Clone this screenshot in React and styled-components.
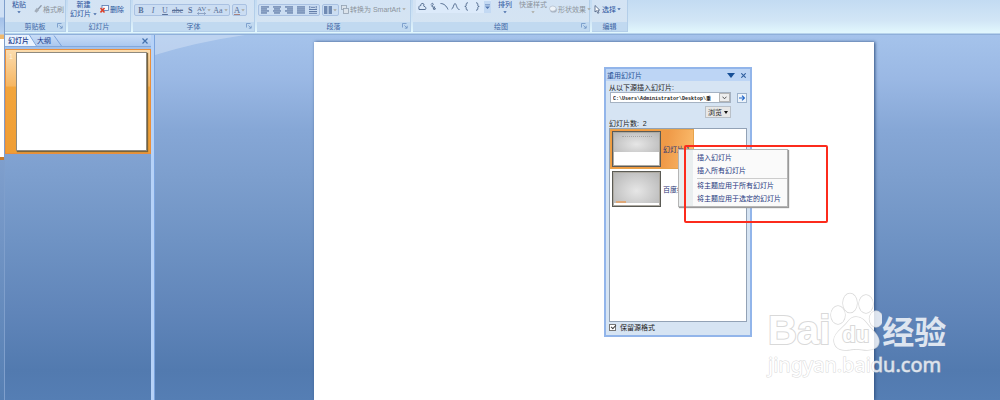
import React from "react";
import styled, { createGlobalStyle } from "styled-components";

const GlobalStyle = createGlobalStyle`
  * {
    box-sizing: border-box;
  }

  body {
    margin: 0;
    font-family: "Liberation Sans", "Noto Sans CJK SC", sans-serif;
    font-size: 7px;
    line-height: 9px;
    color: #1c3a78;
  }

  button {
    margin: 0;
    padding: 0;
    border: none;
    background: none;
    font: inherit;
    color: inherit;
    cursor: pointer;
  }
`;

const Caret = ({ color = "#3f66a5" }) => (
  <svg width="4" height="3" viewBox="0 0 4 3">
    <path d="M0.3 0.3h3.4L2 2.3z" fill={color} />
  </svg>
);

const AlignIcon = ({ rows }) => (
  <svg width="9" height="8" viewBox="0 0 9 8">
    {rows.map(([x, w], i) => (
      <rect key={i} x={x} y={i * 2 + 0.3} width={w} height="1.3" fill="#637da8" />
    ))}
  </svg>
);

const alignments = [
  { name: "左对齐", rows: [[0, 8], [0, 6], [0, 8], [0, 6]] },
  { name: "居中", rows: [[0, 8], [1, 6], [0, 8], [1, 6]] },
  { name: "右对齐", rows: [[0, 8], [2, 6], [0, 8], [2, 6]] },
  { name: "两端对齐", rows: [[0, 8], [0, 8], [0, 8], [0, 8]] },
];

const shapes = [
  { name: "任意多边形", d: "M1 7.5C0.5 5 1 3.5 2.8 3.6 2.2 1.6 5 0.8 5.8 2 6.3 3 5 3.8 5.8 4.2 8 4.2 8.5 7.5 7 7.5z" },
  { name: "自由曲线", d: "M2 2.5C3 0.5 5 1.5 4 3S1.5 3 3 4.5 7 4 5.5 5.5 3.5 6 5 7.5M5 7.5L7 6.5M5 7.5V5.5" },
  { name: "弧形", d: "M0.5 1.5C4 1.5 6.5 4 8 7.5" },
  { name: "曲线", d: "M0.5 7C2.5 7 2.5 1.5 4 1.5S5.5 7.5 8.5 7.5" },
  { name: "左大括号", d: "M6 0.8C4 0.8 4.2 1.8 4.2 3S3.8 4.4 2.8 4.4C3.8 4.4 4.2 4.8 4.2 6S4 8.2 6 8.2" },
  { name: "右大括号", d: "M3 0.8C5 0.8 4.8 1.8 4.8 3S5.2 4.4 6.2 4.4C5.2 4.4 4.8 4.8 4.8 6S5 8.2 3 8.2" },
];

const Group = ({ title, width, launcher, children }) => (
  <GroupBox $width={width}>
    <GroupControls>{children}</GroupControls>
    <GroupTitle>
      <span>{title}</span>
      {launcher && (
        <Launcher aria-label={title}>
          <svg width="6" height="6" viewBox="0 0 6 6" fill="none" stroke="#6f93c4" strokeWidth="0.8">
            <path d="M0.5 4.5V0.5H4.5M2.4 2.4L5 5M5.2 2.8V5.2H2.8" />
          </svg>
        </Launcher>
      )}
    </GroupTitle>
  </GroupBox>
);

const Ribbon = () => (
  <RibbonBar>
    <Group title="剪贴板" width={61} launcher>
      <BigButton $width={26}>
        粘贴
        <Caret />
      </BigButton>
      <SmallButton $muted>
        <svg width="8" height="8" viewBox="0 0 8 8">
          <path d="M7.5 0.3L4 4.2" stroke="#8d99aa" strokeWidth="1.3" />
          <path d="M2.8 2.8L5.2 5 2.6 7.8 0.3 6.2z" fill="#a3adb9" />
        </svg>
        格式刷
      </SmallButton>
    </Group>

    <Group title="幻灯片" width={63}>
      <BigButton $width={29}>
        新建
        <span>
          幻灯片 <Caret />
        </span>
      </BigButton>
      <SmallButton>
        <svg width="9" height="8" viewBox="0 0 9 8">
          <rect x="2" y="0.5" width="6.5" height="5" fill="#f5f8fd" stroke="#5577ae" strokeWidth="0.8" />
          <path d="M0.5 3L4.5 7.4M4.5 3L0.5 7.4" stroke="#df3d25" strokeWidth="1.5" />
        </svg>
        删除
      </SmallButton>
    </Group>

    <Group title="字体" width={122} launcher>
      <ButtonStrip>
        <StripButton><b>B</b></StripButton>
        <StripButton><i>I</i></StripButton>
        <StripButton><u>U</u></StripButton>
        <StripButton><s>abc</s></StripButton>
        <StripButton><b>S</b></StripButton>
        <StripButton>
          <Spacing>
            AV
            <svg width="9" height="3" viewBox="0 0 9 3" fill="none" stroke="#7f95b8" strokeWidth="0.8">
              <path d="M1.8 0.2L0.5 1.5 1.8 2.8M0.5 1.5H8.5M7.2 0.2L8.5 1.5 7.2 2.8" />
            </svg>
          </Spacing>
          <Caret color="#a9a69c" />
        </StripButton>
        <StripButton>Aa<Caret color="#a9a69c" /></StripButton>
      </ButtonStrip>
      <ButtonStrip>
        <StripButton>
          <FontColor>A</FontColor>
          <Caret color="#a9a69c" />
        </StripButton>
      </ButtonStrip>
    </Group>

    <Group title="段落" width={154} launcher>
      <ButtonStrip>
        {alignments.map((item) => (
          <StripButton key={item.name} aria-label={item.name}>
            <AlignIcon rows={item.rows} />
          </StripButton>
        ))}
        <StripButton aria-label="分散对齐">
          <svg width="9" height="8" viewBox="0 0 9 8" stroke="#637da8">
            <path d="M0 3.5H8M0 5.5H8M0 7.3H8M0.8 0V2.5M7.2 0V2.5M2 1.3H6" />
          </svg>
        </StripButton>
      </ButtonStrip>
      <ButtonStrip>
        <StripButton aria-label="分栏">
          <svg width="8" height="8" viewBox="0 0 8 8" stroke="#536f9f" strokeWidth="1.3">
            <path d="M0 1H3.4M0 3H3.4M0 5H3.4M0 7H3.4M4.6 1H8M4.6 3H8M4.6 5H8M4.6 7H8" />
          </svg>
          <Caret color="#a9a69c" />
        </StripButton>
      </ButtonStrip>
      <SmallButton $muted>
        <svg width="8" height="9" viewBox="0 0 8 9" fill="#dbe3eb" stroke="#93a1b1" strokeWidth="0.8">
          <rect x="0.5" y="0.5" width="5" height="4" />
          <rect x="2.5" y="3.5" width="5" height="5" />
        </svg>
        转换为 SmartArt <Caret color="#a9a69c" />
      </SmallButton>
    </Group>

    <Group title="绘图" width={177} launcher>
      <Gallery>
        {shapes.map((shape) => (
          <button key={shape.name} aria-label={shape.name}>
            <svg width="9" height="9" viewBox="0 0 9 9" fill="none" stroke="#486287" strokeWidth="0.9">
              <path d={shape.d} />
            </svg>
          </button>
        ))}
        <GalleryMore aria-label="其他">
          <svg width="5" height="6" viewBox="0 0 5 6">
            <path d="M0 0.5H5V1.3H0zM0 2.5H5L2.5 5z" fill="#5277b0" />
          </svg>
        </GalleryMore>
      </Gallery>
      <BigButton $width={24}>
        排列
        <Caret />
      </BigButton>
      <BigButton $width={28} $muted>
        快速样式
        <Caret color="#a9a69c" />
      </BigButton>
      <SmallButton $muted>
        <svg width="8" height="8" viewBox="0 0 8 8">
          <ellipse cx="4.5" cy="5" rx="3.3" ry="2.6" fill="#a8b3c2" />
          <ellipse cx="3.8" cy="3.6" rx="3.3" ry="2.6" fill="#eef3f8" stroke="#a8b3c2" strokeWidth="0.6" />
        </svg>
        形状效果 <Caret color="#a9a69c" />
      </SmallButton>
    </Group>

    <Group title="编辑" width={36}>
      <SmallButton>
        <svg width="8" height="9" viewBox="0 0 8 9">
          <path d="M2 0.5V7L3.6 5.7 4.8 8.3 6 7.7 4.8 5.3 6.6 5z" fill="#fff" stroke="#44597c" strokeWidth="0.8" />
        </svg>
        选择 <Caret />
      </SmallButton>
    </Group>
  </RibbonBar>
);

const Outline = () => (
  <OutlinePane>
    <OutlineHeader>
      <OutlineTab $active>幻灯片</OutlineTab>
      <svg width="8" height="11" viewBox="0 0 8 11" fill="none">
        <path d="M0 0H1L8 11H0z" fill="#eaf3fe" />
        <path d="M0.5 0L7.5 11" stroke="#7ba2da" />
      </svg>
      <OutlineTab>大纲</OutlineTab>
      <svg width="11" height="11" viewBox="0 0 11 11" fill="none" stroke="#7ba2da">
        <path d="M3 0.5L10.5 11" />
      </svg>
      <CloseButton aria-label="关闭">
        <svg width="6" height="6" viewBox="0 0 6 6" stroke="#4371ae" strokeWidth="1.2">
          <path d="M0.5 0.5L5.5 5.5M5.5 0.5L0.5 5.5" />
        </svg>
      </CloseButton>
    </OutlineHeader>
    <OutlineSlide>
      <SlideNumber>1</SlideNumber>
      <SlideThumb />
    </OutlineSlide>
  </OutlinePane>
);

const ReusePanel = () => (
  <PanelWindow>
    <PanelTitle>
      <span>重用幻灯片</span>
      <TitleButton aria-label="选项">
        <svg width="8" height="5" viewBox="0 0 8 5">
          <path d="M0 0H8L4 5z" fill="#174f96" />
        </svg>
      </TitleButton>
      <TitleButton aria-label="关闭">
        <svg width="5" height="5" viewBox="0 0 5 5" stroke="#315f9e" strokeWidth="1.1">
          <path d="M0.3 0.3L4.7 4.7M4.7 0.3L0.3 4.7" />
        </svg>
      </TitleButton>
    </PanelTitle>
    <PanelBody>
      <label htmlFor="source">从以下源插入幻灯片:</label>
      <SourceRow>
        <SourceBox>
          <SourceInput id="source" defaultValue="C:\Users\Administrator\Desktop\重" />
          <SourceToggle aria-label="展开">
            <svg width="5" height="4" viewBox="0 0 5 4" fill="none" stroke="#555">
              <path d="M0.5 0.7L2.5 2.8 4.5 0.7" />
            </svg>
          </SourceToggle>
        </SourceBox>
        <GoButton aria-label="转到">
          <svg width="6" height="6" viewBox="0 0 6 6" fill="none" stroke="#2468c9" strokeWidth="1.1">
            <path d="M0 3H5.2M3 0.7L5.4 3 3 5.3" />
          </svg>
        </GoButton>
      </SourceRow>
      <BrowseButton>
        浏览
        <svg width="4" height="3" viewBox="0 0 4 3">
          <path d="M0 0H4L2 3z" fill="#111" />
        </svg>
      </BrowseButton>
      <SlideCount>幻灯片数:&nbsp; 2</SlideCount>
      <SlideList>
        <SlideItem $selected>
          <Preview $fill="60%" />
          幻灯片 1
        </SlideItem>
        <SlideItem>
          <Preview $fill="92%" $accent />
          百度经验
        </SlideItem>
      </SlideList>
      <KeepFormat htmlFor="keep">
        <CheckBox id="keep" type="checkbox" defaultChecked />
        保留源格式
      </KeepFormat>
    </PanelBody>
    <ContextMenu>
      <MenuItem>插入幻灯片</MenuItem>
      <MenuItem>插入所有幻灯片</MenuItem>
      <MenuLine />
      <MenuItem>将主题应用于所有幻灯片</MenuItem>
      <MenuItem>将主题应用于选定的幻灯片</MenuItem>
    </ContextMenu>
    <RedFrame />
  </PanelWindow>
);

const Watermark = () => (
  <WatermarkBox>
    <WatermarkTop>
      <Brand>Bai</Brand>
      <Paw>
        <svg width="52" height="60" viewBox="0 0 52 60" fill="#fff" stroke="#d0d0d0" strokeWidth="1.4">
          <ellipse cx="8" cy="24" rx="7" ry="9" />
          <ellipse cx="20" cy="12" rx="7" ry="9.5" />
          <ellipse cx="36" cy="13" rx="7" ry="9" />
          <ellipse cx="46" cy="28" rx="6.5" ry="8" />
          <path d="M26 26C32 26 35 30 38 34S49 44 49 50 44 59 37 59C33 59 30 58 26 58S20 59 15 59C8 59 4 55 4 49S11 38 15 34 20 26 26 26z" />
        </svg>
        <PawText>du</PawText>
      </Paw>
      <BrandCn>经验</BrandCn>
    </WatermarkTop>
    <SiteName>jingyan.baidu.com</SiteName>
  </WatermarkBox>
);

const App = () => {
  return (
    <Screen>
      <GlobalStyle />
      <BackWindow>
        <BackRibbon />
        <BackSlide />
      </BackWindow>
      <MainWindow>
        <Ribbon />
        <Workspace>
          <Outline />
          <Splitter />
          <Stage>
            <Sheen viewBox="0 0 90 20" width="90" height="20">
              <path d="M0 0H90Q42 7 0 20z" fill="#fff" fillOpacity="0.28" />
            </Sheen>
            <Slide />
            <ReusePanel />
          </Stage>
        </Workspace>
      </MainWindow>
      <Watermark />
    </Screen>
  );
};

const Screen = styled.div`
  position: relative;
  display: flex;
  min-height: 100vh;
  overflow: hidden;
`;

const BackWindow = styled.div`
  flex: 0 0 5px;
  display: flex;
  flex-direction: column;
  background: linear-gradient(#a9c5ee 10%, #7f9fcd 40%, #567fb3);
  border-right: 1px solid #7f9fcc;
`;

const BackRibbon = styled.div`
  height: 39px;
  background: linear-gradient(#cfe0f5 0, #cfe0f5 17px, #a3c0e8 18px, #b9d2f1 34px, #f0b86d 35px);
`;

const BackSlide = styled.div`
  height: 121px;
  background: #fff;
  border-bottom: 3px solid #c77a2c;
`;

const MainWindow = styled.div`
  flex: 1;
  min-width: 0;
  display: flex;
  flex-direction: column;
`;

const RibbonBar = styled.div`
  display: flex;
  gap: 2px;
  height: 35px;
  padding-bottom: 3px;
  background: linear-gradient(#c3dbf2, #d2e6f6 60%, #e1f7fd 32px, #e1f7fd 33px, #8fb0da 34px);
  overflow: hidden;
`;

const GroupBox = styled.section`
  flex: 0 0 ${(props) => props.$width}px;
  min-width: 0;
  display: flex;
  flex-direction: column;
  border: solid #b3cee9;
  border-width: 0 1px 1px 0;
  background: linear-gradient(#d3e3f4, #d5e4f2);
`;

const GroupControls = styled.div`
  flex: 1;
  display: flex;
  align-items: flex-start;
  gap: 2px;
  padding: 0 1px;
  min-height: 0;
`;

const GroupTitle = styled.div`
  position: relative;
  height: 9px;
  background: #c1d9f0;
  text-align: center;
  color: #3f66a5;
`;

const Launcher = styled.button`
  position: absolute;
  right: 2px;
  top: 1px;
  display: flex;
`;

const BigButton = styled.button`
  flex: 0 0 ${(props) => props.$width}px;
  display: flex;
  flex-direction: column;
  align-items: center;
  height: 18px;
  white-space: nowrap;
  color: ${(props) => (props.$muted ? "#8c939b" : "#27509a")};

  > svg {
    margin-top: 2px;
  }

  span svg {
    vertical-align: middle;
  }
`;

const SmallButton = styled.button`
  display: flex;
  align-items: center;
  gap: 1px;
  height: 18px;
  white-space: nowrap;
  color: ${(props) => (props.$muted ? "#8c939b" : "#27509a")};
`;

const ButtonStrip = styled.div`
  display: flex;
  align-items: center;
  height: 12px;
  margin-top: 4px;
  border: 1px solid #a9c1e2;
  border-radius: 2px;
  background: #cbddf2;
`;

const StripButton = styled.button`
  display: flex;
  align-items: center;
  justify-content: center;
  gap: 1px;
  min-width: 12px;
  padding: 0 1px;
  height: 10px;
  font-family: "Liberation Serif", serif;
  font-size: 8px;
  color: #5a7198;
`;

const Spacing = styled.span`
  display: flex;
  flex-direction: column;
  align-items: center;
  font-size: 7px;
  line-height: 6px;
`;

const FontColor = styled.span`
  font-size: 9px;
  line-height: 8px;
  border-bottom: 1px solid #a7837f;
`;

const Gallery = styled.div`
  display: flex;
  align-items: center;
  gap: 2px;
  height: 13px;
  margin-left: 2px;
  padding-left: 2px;
  background: #dceafa;

  button {
    display: flex;
  }
`;

const GalleryMore = styled.button`
  padding: 3px 1px;
  background: #c3d9f3;
`;

const Workspace = styled.div`
  flex: 1;
  display: flex;
  background: linear-gradient(
    #a5c3eb 0,
    #9ab8e4 12%,
    #86a7d6 26%,
    #7c9ecd 40%,
    #6f93c4 56%,
    #6085b9 76%,
    #527aaf 92%,
    #557eb4 100%
  );
`;

const OutlinePane = styled.aside`
  flex: 0 0 146px;
`;

const OutlineHeader = styled.div`
  display: flex;
  height: 12px;
  margin-bottom: 2px;
  background: linear-gradient(#c9ddf7, #abc8ef);
  border-bottom: 1px solid #82a8dc;
`;

const OutlineTab = styled.button`
  height: 11px;
  padding-left: ${(props) => (props.$active ? 3 : 0)}px;
  background: ${(props) => (props.$active ? "#eaf3fe" : "none")};
  font-weight: ${(props) => (props.$active ? 500 : 400)};
  color: #16368a;
`;

const CloseButton = styled.button`
  display: flex;
  align-items: center;
  margin-left: auto;
  padding-right: 3px;
`;

const OutlineSlide = styled.div`
  display: flex;
  height: 105px;
  padding: 2px 3px 2px 0;
  border: 1px solid #ea8f3c;
  background: linear-gradient(#fbdcae, #f6b662 35%, #f2a53c 36%, #ef9d34);
`;

const SlideNumber = styled.span`
  width: 10px;
  padding-left: 3px;
  color: #fff3dc;
`;

const SlideThumb = styled.div`
  flex: 1;
  background: #fff;
  border: 1px solid #8f8a7e;
  box-shadow: 1px 1px 1px #79633c;
`;

const Splitter = styled.div`
  flex: 0 0 4px;
  background: #b6d2f8;
  border-right: 1px solid #7ba4de;
`;

const Stage = styled.main`
  position: relative;
  flex: 1;
  display: flex;
  padding: 7px 126px 0 159px;
`;

const Sheen = styled.svg`
  position: absolute;
  left: 0;
  top: 0;
`;

const Slide = styled.div`
  flex: 1;
  background: #fff;
  box-shadow: 1px 0 3px #2f4f7f;
`;

const PanelWindow = styled.section`
  position: absolute;
  left: 449px;
  top: 32px;
  width: 148px;
  border: 2px solid #92b5ea;
  background: #d6e4f3;
  color: #222;
`;

const PanelTitle = styled.header`
  display: flex;
  align-items: center;
  gap: 6px;
  height: 12px;
  padding: 0 4px 0 1px;
  background: #bdd5f5;
  color: #234f92;

  span {
    flex: 1;
  }
`;

const TitleButton = styled.button`
  display: flex;
`;

const PanelBody = styled.div`
  display: flex;
  flex-direction: column;
  padding: 2px 3px 2px 3px;
`;

const SourceRow = styled.div`
  display: flex;
  align-items: center;
  justify-content: space-between;
  padding-left: 1px;
`;

const SourceBox = styled.div`
  display: flex;
  width: 121px;
  height: 11px;
  border: 1px solid #a5b2c2;
  background: #fff;
`;

const SourceInput = styled.input`
  flex: 1;
  min-width: 0;
  padding: 0 0 0 2px;
  border: none;
  outline: none;
  background: none;
  font-family: "Liberation Mono", "Noto Sans CJK SC", monospace;
  font-size: 5px;
  font-weight: bold;
  color: #222;
`;

const SourceToggle = styled.button`
  display: flex;
  align-items: center;
  padding: 0 2px;
  border: 1px solid #b5b5b5;
  background: #eee;
`;

const GoButton = styled.button`
  display: flex;
  align-items: center;
  justify-content: center;
  width: 10px;
  height: 10px;
  border: 1px solid #9cb2cc;
  background: #edf4fb;
`;

const BrowseButton = styled.button`
  display: flex;
  align-items: center;
  justify-content: center;
  gap: 2px;
  align-self: flex-end;
  width: 26px;
  height: 12px;
  margin: 3px 16px 0 0;
  border: 1px solid #b9c0c8;
  background: #e7e7e7;
`;

const SlideCount = styled.div`
  margin: 1px 0 0;
`;

const SlideList = styled.ul`
  height: 194px;
  margin: 0;
  padding: 0;
  list-style: none;
  border: 1px solid #92a2b6;
  background: #fff;
`;

const SlideItem = styled.li`
  display: flex;
  align-items: center;
  gap: 2px;
  width: 84px;
  height: 40px;
  padding: 1px;
  white-space: nowrap;
  color: #1f3476;
  border: 1px solid ${(props) => (props.$selected ? "#e7a34b" : "transparent")};
  background: ${(props) =>
    props.$selected ? "linear-gradient(100deg, #f39a3f 40%, #ef9a48 65%, #fbbd6e)" : "none"};
`;

const Preview = styled.div`
  position: relative;
  flex: 0 0 49px;
  height: 36px;
  border: 1px solid #5b5b55;
  outline: 1px solid #aeaaa2;
  outline-offset: -2px;
  background:
    radial-gradient(ellipse at 50% 60%, #e6e6e6, #b3b3b3) top / 100% ${(props) => props.$fill} no-repeat,
    #fff;

  &::after {
    content: "";
    position: absolute;
    left: ${(props) => (props.$accent ? 3 : 9)}px;
    top: ${(props) => (props.$accent ? 29 : 4)}px;
    width: ${(props) => (props.$accent ? 10 : 30)}px;
    border-top: ${(props) => (props.$accent ? "2px solid #dfa878" : "1px dotted #a5a5a5")};
  }
`;

const KeepFormat = styled.label`
  display: flex;
  align-items: center;
  gap: 4px;
  height: 11px;
`;

const CheckBox = styled.input`
  appearance: none;
  width: 7px;
  height: 7px;
  margin: 0;
  border: 1px solid #777;
  background: #fff;

  &:checked::after {
    content: "";
    display: block;
    width: 4px;
    height: 2px;
    margin-left: 1px;
    border: solid #444;
    border-width: 0 0 1px 1px;
    transform: rotate(-45deg);
  }
`;

const ContextMenu = styled.div`
  position: absolute;
  left: 72px;
  top: 80px;
  width: 110px;
  padding: 1px 0;
  border: 1px solid #b5b5b5;
  background: linear-gradient(90deg, #e9eeef 14px, #fafafa 14px);
  box-shadow: 1px 1px 1px #999;
`;

const MenuItem = styled.button`
  display: block;
  width: 100%;
  height: 13px;
  padding-left: 18px;
  text-align: left;
  white-space: nowrap;
  color: #23357d;
`;

const MenuLine = styled.hr`
  margin: 1px 0 0 18px;
  border: none;
  border-top: 1px solid #ccc;
`;

const RedFrame = styled.div`
  position: absolute;
  left: 78px;
  top: 76px;
  width: 144px;
  height: 78px;
  border: 2px solid #fc2b1c;
  border-radius: 2px;
  pointer-events: none;
`;

const WatermarkBox = styled.div`
  position: absolute;
  right: 52px;
  bottom: 21px;
  width: 180px;
  opacity: 0.8;
  color: #fff;
  -webkit-text-stroke: 2px #d0d0d0;
  paint-order: stroke fill;
  pointer-events: none;
`;

const WatermarkTop = styled.div`
  display: flex;
  align-items: flex-end;
  height: 60px;
`;

const Brand = styled.span`
  flex: 0 0 60px;
  font-size: 40px;
  line-height: 42px;
  font-weight: bold;
`;

const Paw = styled.span`
  position: relative;
  flex: 0 0 52px;
  height: 60px;
`;

const PawText = styled.span`
  position: absolute;
  left: 12px;
  top: 32px;
  font-size: 22px;
  line-height: 24px;
  font-weight: bold;
`;

const BrandCn = styled.span`
  font-size: 32px;
  line-height: 36px;
  font-weight: bold;
  -webkit-text-stroke: 0;
`;

const SiteName = styled.div`
  font-family: "Noto Sans", sans-serif;
  font-size: 20px;
  line-height: 28px;
  -webkit-text-stroke-width: 1px;
`;

export default App;
